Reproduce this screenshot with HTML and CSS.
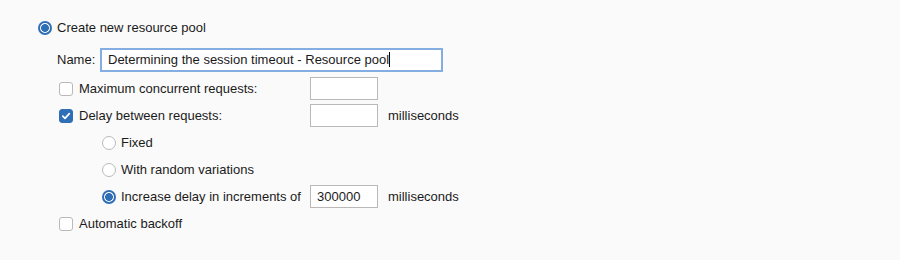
FILE: index.html
```html
<!DOCTYPE html>
<html lang="en">
<head>
    <meta charset="UTF-8">
    <title>Resource pool</title>
    <link rel="stylesheet" href="styles.css">
</head>
<body>
    <div class="panel">
        <div class="row top-row">
            <span class="radio checked"></span>
            <span class="label">Create new resource pool</span>
        </div>
        <div class="pool">
            <div class="row name-row">
                <span class="label">Name:</span>
                <div class="text-field name-field">Determining the session timeout - Resource pool<span class="caret"></span></div>
            </div>
            <div class="row option-row">
                <div class="option">
                    <span class="checkbox"></span>
                    <span class="label">Maximum concurrent requests:</span>
                </div>
                <div class="text-field small-field"></div>
            </div>
            <div class="row option-row">
                <div class="option">
                    <span class="checkbox checked">
                        <svg width="10" height="10" viewBox="0 0 10 10"><path d="M1.8 5.2 L4 7.4 L8.3 2.6" fill="none" stroke="#fff" stroke-width="1.7" stroke-linecap="round" stroke-linejoin="round"/></svg>
                    </span>
                    <span class="label">Delay between requests:</span>
                </div>
                <div class="text-field small-field"></div>
                <span class="unit">milliseconds</span>
            </div>
            <div class="row sub-row">
                <div class="option sub-option">
                    <span class="radio"></span>
                    <span class="label">Fixed</span>
                </div>
            </div>
            <div class="row sub-row">
                <div class="option sub-option">
                    <span class="radio"></span>
                    <span class="label">With random variations</span>
                </div>
            </div>
            <div class="row sub-row">
                <div class="option sub-option">
                    <span class="radio checked"></span>
                    <span class="label">Increase delay in increments of</span>
                </div>
                <div class="text-field small-field">300000</div>
                <span class="unit">milliseconds</span>
            </div>
            <div class="row option-row">
                <div class="option">
                    <span class="checkbox"></span>
                    <span class="label">Automatic backoff</span>
                </div>
            </div>
        </div>
    </div>
</body>
</html>
```

FILE: styles.css
```css
body {
    margin: 0;
    padding: 0;
    background-color: #fafafa;
    font-family: 'Liberation Sans', Arial, sans-serif;
    font-size: 13px;
    color: #1a1a1a;
}
.panel {
    padding: 14px 0 0 38px;
}
.row {
    display: flex;
    align-items: center;
    height: 27px;
}
.top-row .label {
    margin-left: 5px;
}
.pool {
    padding-left: 19px;
}
.name-row {
    height: 31px;
    margin-top: 3px;
}
.name-row .label {
    width: 43px;
}
.option-row {
    padding-left: 2px;
}
.option {
    display: flex;
    align-items: center;
    width: 251px;
}
.option .label {
    margin-left: 6px;
}
.sub-row {
    padding-left: 45px;
}
.sub-option {
    width: 208px;
}
.sub-option .label {
    margin-left: 5px;
}

/* controls */
.radio {
    box-sizing: border-box;
    width: 14px;
    height: 14px;
    border: 1px solid #b9b9b9;
    border-radius: 50%;
    background-color: #fff;
    flex-shrink: 0;
}
.radio.checked {
    border: 2px solid #2f6fb6;
    background: radial-gradient(circle, #2f6fb6 0 3.6px, #fff 4.2px);
}
.checkbox {
    box-sizing: border-box;
    width: 14px;
    height: 14px;
    border: 1px solid #b9b9b9;
    border-radius: 3px;
    background-color: #fff;
    flex-shrink: 0;
    display: flex;
    align-items: center;
    justify-content: center;
}
.checkbox.checked {
    border-color: #2f6fb6;
    background-color: #2f6fb6;
}
.text-field {
    box-sizing: border-box;
    background-color: #fff;
    border: 1px solid #bdb8b8;
    display: flex;
    align-items: center;
    padding-left: 6px;
}
.name-field {
    width: 343px;
    height: 24px;
    border: 2px solid #84ade2;
    padding-left: 6px;
}
.caret {
    display: inline-block;
    width: 1px;
    height: 15px;
    background-color: #000;
}
.small-field {
    width: 68px;
    height: 23px;
}
.unit {
    margin-left: 10px;
}
```
